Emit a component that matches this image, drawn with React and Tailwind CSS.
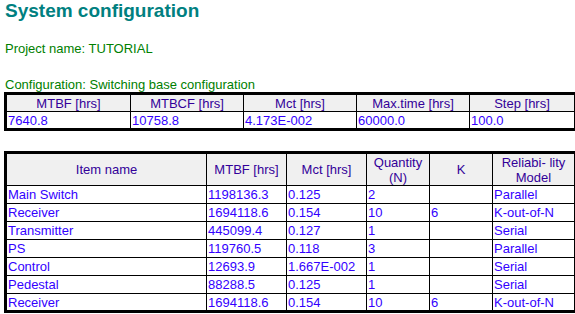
import React from 'react';

// Summary of the overall run parameters
const runParams = [
    { label: 'MTBF [hrs]', value: '7640.8', width: 125 },
    { label: 'MTBCF [hrs]', value: '10758.8', width: 113 },
    { label: 'Mct [hrs]', value: '4.173E-002', width: 113 },
    { label: 'Max.time [hrs]', value: '60000.0', width: 113 },
    { label: 'Step [hrs]', value: '100.0', width: 106 },
];

const items = [
    { name: 'Main Switch', mtbf: '1198136.3', mct: '0.125', qty: '2', k: '', model: 'Parallel' },
    { name: 'Receiver', mtbf: '1694118.6', mct: '0.154', qty: '10', k: '6', model: 'K-out-of-N' },
    { name: 'Transmitter', mtbf: '445099.4', mct: '0.127', qty: '1', k: '', model: 'Serial' },
    { name: 'PS', mtbf: '119760.5', mct: '0.118', qty: '3', k: '', model: 'Parallel' },
    { name: 'Control', mtbf: '12693.9', mct: '1.667E-002', qty: '1', k: '', model: 'Serial' },
    { name: 'Pedestal', mtbf: '88288.5', mct: '0.125', qty: '1', k: '', model: 'Serial' },
    { name: 'Receiver', mtbf: '1694118.6', mct: '0.154', qty: '10', k: '6', model: 'K-out-of-N' },
];

const th = 'border border-black bg-[#f0f0f0] text-[#330099] font-normal text-center p-0';
const td = 'border border-black text-[#3300ff] text-left px-[1px] py-0 whitespace-nowrap';

export default function App() {
    return (
        <div className="min-h-screen bg-white font-['Liberation_Sans',Arial,sans-serif] text-[13px] leading-[15px]">
            <h1 className="text-[19px] leading-[22px] font-bold text-[#008080] pl-[5px]">System configuration</h1>

            <p className="text-[#008000] pl-[5px] mt-[19px]">Project name: TUTORIAL</p>

            <p className="text-[#008000] pl-[5px] mt-[21px]">Configuration: Switching base configuration</p>

            <table className="ml-[4px] w-[570px] table-fixed border-collapse border-[3px] border-black">
                <colgroup>
                    {runParams.map((p) => (
                        <col key={p.label} style={{ width: p.width }} />
                    ))}
                </colgroup>
                <thead>
                    <tr className="h-[18px]">
                        {runParams.map((p) => (
                            <th key={p.label} className={th}>{p.label}</th>
                        ))}
                    </tr>
                </thead>
                <tbody>
                    <tr className="h-[18px]">
                        {runParams.map((p) => (
                            <td key={p.label} className={td}>{p.value}</td>
                        ))}
                    </tr>
                </tbody>
            </table>

            {/* Item list */}
            <table className="ml-[4px] mt-[20px] w-[570px] table-fixed border-collapse border-[3px] border-black">
                <colgroup>
                    <col style={{ width: 201 }} />
                    <col style={{ width: 80 }} />
                    <col style={{ width: 80 }} />
                    <col style={{ width: 63 }} />
                    <col style={{ width: 63 }} />
                    <col style={{ width: 83 }} />
                </colgroup>
                <thead>
                    <tr className="h-[33px]">
                        <th className={th}>Item name</th>
                        <th className={th}>MTBF [hrs]</th>
                        <th className={th}>Mct [hrs]</th>
                        <th className={th}>Quantity<br />(N)</th>
                        <th className={th}>K</th>
                        <th className={th}>Reliabi- lity<br />Model</th>
                    </tr>
                </thead>
                <tbody>
                    {items.map((it, i) => (
                        <tr key={i} className="h-[18px]">
                            <td className={td}>{it.name}</td>
                            <td className={td}>{it.mtbf}</td>
                            <td className={td}>{it.mct}</td>
                            <td className={td}>{it.qty}</td>
                            <td className={td}>{it.k}</td>
                            <td className={td}>{it.model}</td>
                        </tr>
                    ))}
                </tbody>
            </table>
        </div>
    );
}
